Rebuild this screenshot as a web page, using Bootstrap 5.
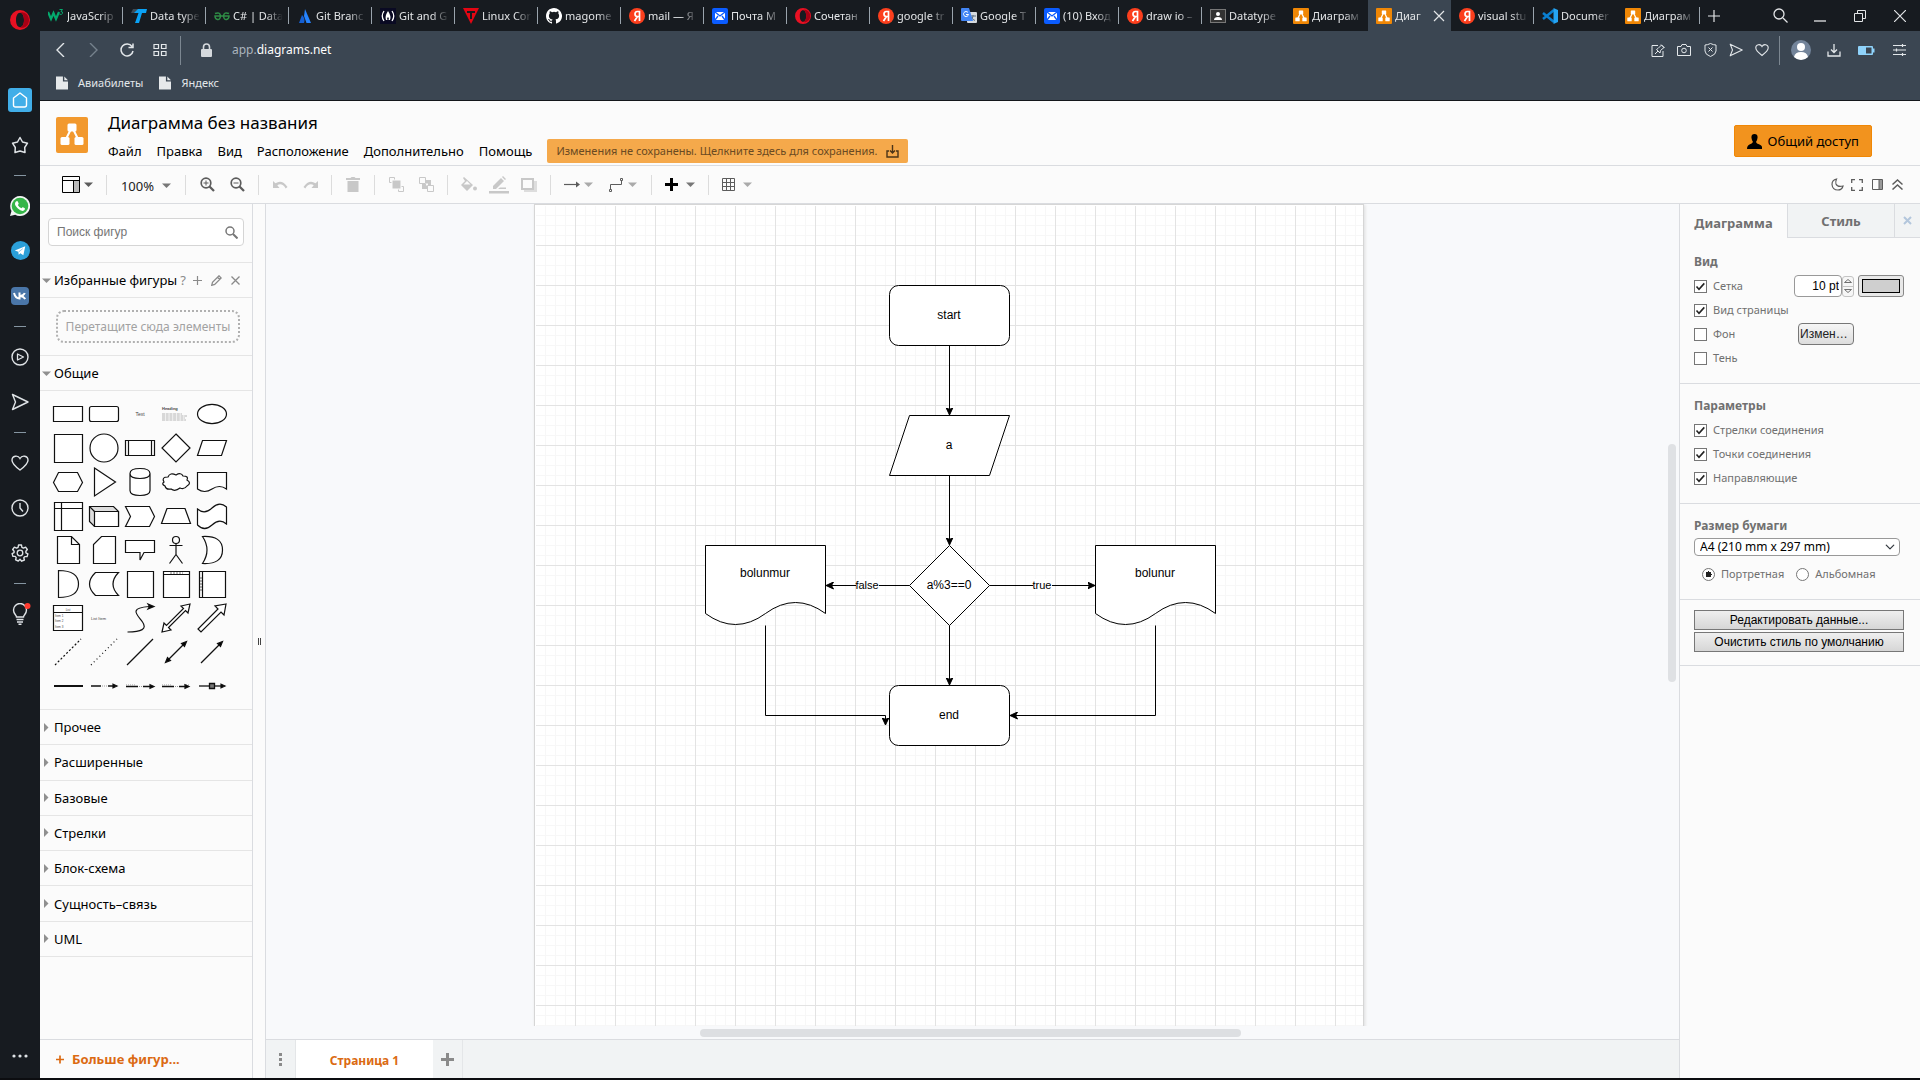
<!DOCTYPE html>
<html lang="ru">
<head>
<meta charset="utf-8">
<meta name="viewport" content="width=device-width, initial-scale=1">
<title>Диаграмма без названия</title>
<link href="https://cdn.jsdelivr.net/npm/bootstrap@5.3.0/dist/css/bootstrap.min.css" rel="stylesheet">
<style>
:root{--ui:"Noto Sans","Open Sans",sans-serif;--arial:"Liberation Sans",Arial,sans-serif;--line:#dadce0;--chrome:#3b4652;--dark:#171b20}
body{font-family:var(--ui);font-size:13px;line-height:20px;color:#000;background:#fbfbfb;overflow:hidden}
svg{display:block;flex:none}
button{font-family:inherit;color:inherit}
.bare{border:0;background:none;padding:0;display:flex;align-items:center;justify-content:center}
.ln{fill:none}
.ln:not([stroke]){stroke:currentColor}
.shell{border-bottom:2px solid #0c0d10}
/* left rail of the browser */
.rail{width:40px;background:var(--dark);color:#dfe3e6}
.rail .bare{width:40px;height:45px;flex:none}
.rail .brand{height:40px;margin-bottom:37px}
.rail hr{width:12px;height:1px;margin:8px 0 7px;border:0;background:#8595a1;opacity:1;flex:none}
.home-tile{width:24px;height:24px;background:#41aee8;border-radius:3px}
/* tab strip */
.strip{height:31px;background:var(--dark);color:#e3e5e7}
.tb-tab{width:83px;height:31px;padding:0 6px 0 8px;gap:3px;font-size:11px;color:inherit;text-decoration:none;position:relative}
.tb-tab .cap{overflow:hidden;white-space:nowrap;flex:1;-webkit-mask-image:linear-gradient(90deg,#000 65%,transparent);mask-image:linear-gradient(90deg,#000 65%,transparent)}
.tb-tab.cut::after{content:"";position:absolute;right:0;top:7px;height:17px;width:1px;background:#9aa4ad}
.tb-tab.on{background:var(--chrome)}
.win .bare{width:40px;height:31px}
/* address row */
.addr{height:38px;background:var(--chrome);color:#e3e7ea}
.addr .bare{height:30px}
.addr .nav-b{width:33px}
.addr .act{width:26px}
.addr .wide{width:33px}
.vbar{width:1px;height:29px;background:#7c8791}
.url{border:0;background:none;font-size:12px;color:#fff}
.url span{color:#aab4bd}
.marks{height:32px;background:var(--chrome);border-bottom:1px solid #14171b;color:#e3e7ea;font-size:11px}
.marks a{color:inherit;text-decoration:none;gap:10px}
/* editor header */
.head{height:65px;border-bottom:1px solid var(--line);padding:0 48px 0 16px}
.doc-title{font-size:17px;line-height:24px;margin:0 0 4px;padding-top:2px;font-weight:400}
.menu-row{gap:15px;height:24px}
.menu-row a{color:#000;text-decoration:none}
.save-b{height:24px;border:0;border-radius:2px;background:#f5a94b;color:#6a4a22;font-size:11px;padding:0 9px;gap:8px}
.share-b{height:32px;border:1px solid #f08705;border-radius:2px;background:#f2931e;padding:0 12px;gap:6px}
/* toolbar */
.tools{height:38px;border-bottom:1px solid var(--line);padding:0 13px 0 16px;color:#5c5c5c}
.tools .one{width:30px;height:30px;color:#c8c8c8}
.tools .dark{color:#5c5c5c}
.tools .drop{height:30px;width:36px;margin:0 6px 0 2px;gap:0}
.tools .drop>svg:first-child{margin:0 4px 0 3px}
.tools .zoomer{width:66px;height:30px;gap:8px;color:#222;padding-top:2px}
.tools .tail{width:20px;height:30px}
.rule{width:1px;height:20px;margin:0 6px;background:#dcdcdc}
/* shapes panel */
.side{width:213px;border-right:1px solid var(--line)}
.find{height:59px;padding:14px 8px 0;border-bottom:1px solid #e5e5e5}
.find .box{border:1px solid #d5d5d5;border-radius:4px;height:28px;background:#fff;padding:0 5px 0 6px}
.find input{border:0;outline:0;background:none;font:12px var(--arial);min-width:0}
.find input::placeholder{color:#757575}
.sec{height:35px;border-bottom:1px solid #e5e5e5;padding:0 12px 0 2px;gap:3px}
.sec button{color:#8a8a8a}
.sec a{color:#000;text-decoration:none}
.dropzone{height:33px;margin:12px 12px 12px 16px;border:2px dotted #b0b0b0;border-radius:8px;color:#a2a2a2;font-size:12px}
.zonewrap{border-bottom:1px solid #e5e5e5}
.pal{display:grid;grid-template-columns:repeat(5,36px);grid-auto-rows:34px;padding:6px 0 6px 10px;border-bottom:1px solid #e5e5e5}
.pal button{border:0;background:none;padding:0}
.pal svg{width:36px;height:34px;fill:#fff;stroke:#111;stroke-width:1.2}
.pal text{stroke:none;fill:#444;font-family:var(--arial)}
.closed-list{height:247px}
.closed-list .sec{flex:1;height:auto}
.more{height:39px;border-top:1px solid var(--line);color:#db6a12;font-weight:700;padding:0 16px;text-decoration:none;gap:8px}
.more:hover{color:#db6a12}
.split{width:13px;border-right:1px solid var(--line);color:#444}
/* canvas */
.stage{background:#f8f9fb}
.sheet{margin-left:268px;border:solid #d6d6d6;border-width:1px 1px 0;box-shadow:1px 1px 3px #ddd;background:#fff}
.sheet text{font:12px var(--arial);text-anchor:middle}
.sheet .sm{font-size:11px}
.vtrack{width:13px;padding:240px 3px 0 2px}
.vthumb{width:8px;height:238px;border-radius:4px;background:#dfe1e4}
.htrack{height:13px;padding:3px 0 0 434px;background:#f8f9fb}
.hthumb{width:541px;height:8px;border-radius:4px;background:#dddfe2}
.pages{height:39px;background:#f1f3f4;border-top:1px solid var(--line);color:#8a8a8a}
.pages .bare{width:30px;border-right:1px solid #e4e6e8}
.pages .cur{width:137px;background:#fff;color:#db6a12;font-size:12px;font-weight:700;text-decoration:none;padding-top:4px}
/* format panel */
.fmt{width:241px;border-left:1px solid var(--line);color:#707070;font-size:11px}
.ftabs{height:34px;font-size:13px;font-weight:700}
.ftabs button{width:107px;font-weight:700}
.ftabs .alt{background:#f1f3f4;border:solid var(--line);border-width:0 0 1px 1px}
.ftabs .x-b{flex:1;width:auto;color:#b3c6dc}
.blk{padding:10px 16px 13px 14px;border-bottom:1px solid var(--line)}
.blk.first{padding-top:12px}
.blk h2{font-size:12px;line-height:24px;margin:0;font-weight:700}
.line24{height:24px}
.tick{appearance:none;width:13px;height:13px;border:1px solid #767676;background:#fff;margin:0 6px 0 0;flex:none}
.tick:checked{background:#fff url("data:image/svg+xml,%3Csvg xmlns='http://www.w3.org/2000/svg' viewBox='0 0 11 11'%3E%3Cpath d='M1.5 5.5 4 8.2 9.3 2.4' fill='none' stroke='%23222' stroke-width='1.6'/%3E%3C/svg%3E")}
.dot{appearance:none;width:13px;height:13px;border:1px solid #767676;border-radius:50%;background:#fff;margin:0 6px 0 0;flex:none}
.dot:checked{background:radial-gradient(circle,#222 0 3px,#fff 3px)}
.num{width:48px;height:22px;border:1px solid #999;border-radius:4px;background:#fff;font:12px var(--arial);text-align:right;padding:0 2px;color:#000}
.spin{width:12px;height:21px;border:1px solid #c4c4c4;border-radius:3px;background:#f6f6f6}
.spin button{flex:1;width:100%}
.spin button+button{border-top:1px solid #c4c4c4}
.swatch{width:46px;height:22px;border:1px solid #888;border-radius:3px;background:#e8e8e8;padding:3px}
.swatch span{display:block;height:14px;border:1px solid #000;background:#cfcfcf}
.chg{width:56px;height:22px;border:1px solid #777;border-radius:4px;background:linear-gradient(#f6f6f6,#ddd);font:12px var(--arial);color:#222;padding:0 1px;text-align:left;margin-right:50px}
.paper{height:18px;width:206px;border:1px solid #999;border-radius:4px;font-size:12px;line-height:16px;padding:0 20px 0 5px;margin-bottom:6px;color:#000;background-color:#fff;background-position:right 4px center;background-size:10px}
.btns{gap:2px}
.wide-b{width:210px;height:20px;border:1px solid #777;background:linear-gradient(#efefef,#d6d6d6);font:12px var(--arial);color:#000;padding:0}
</style>
<script src="https://cdn.jsdelivr.net/npm/bootstrap@5.3.0/dist/js/bootstrap.bundle.min.js"></script>
</head>
<body>
<svg width="0" height="0" class="position-absolute" aria-hidden="true">
<defs>
<symbol id="i-ya" viewBox="0 0 16 16"><circle cx="8" cy="8" r="8" fill="#fc3f1d"/><path d="M10.500 13V3.500H8.300Q6 3.600 6 6t2.300 2.500h2M8.500 8.500L5.500 13" fill="none" stroke="#fff" stroke-width="1.700"/></symbol>
<symbol id="i-mail" viewBox="0 0 16 16"><rect width="16" height="16" rx="2" fill="#0b5cff"/><rect x="3" y="4" width="10" height="8" fill="#fff"/><path d="M3 4l5 4 5-4M3 12l3-4M13 12l-3-4" stroke="#0b5cff" stroke-width="1.300" fill="none"/></symbol>
<symbol id="i-dio" viewBox="0 0 16 16"><rect width="16" height="16" rx="1" fill="#f08705"/><path d="M8 4L4.500 11M8 4l3.500 7" stroke="#fff" stroke-width="1.300"/><rect x="5.800" y="2.500" width="4.400" height="3.800" rx=".6" fill="#fff"/><rect x="2.300" y="9.500" width="4.400" height="3.800" rx=".6" fill="#fff"/><rect x="9.300" y="9.500" width="4.400" height="3.800" rx=".6" fill="#fff"/></symbol>
<symbol id="i-opera" viewBox="0 0 20 20"><path fill-rule="evenodd" fill="#e81123" d="M10 0a10 10 0 1 0 0 20a10 10 0 0 0 0-20zM10 2.800c2.600 0 4 3.300 4 7.200s-1.400 7.200-4 7.200-4-3.300-4-7.200 1.400-7.200 4-7.200z"/><path fill="#a70014" d="M10 2.800c2.600 0 4 3.300 4 7.200s-1.400 7.200-4 7.200c3 2 9-1 9-7.200s-6-9.200-9-7.200z"/></symbol>
<symbol id="i-page" viewBox="0 0 13 15"><path fill="#e6e9eb" d="M0 .5h7.500v5.500H13v8.500H0zM9 .5l4 4H9z"/></symbol>
<symbol id="i-car" viewBox="0 0 9 5"><path fill="currentColor" d="M0 .5h9L4.500 5z"/></symbol>
<symbol id="i-send" viewBox="0 0 18 18"><path fill="none" stroke="currentColor" stroke-width="1.400" stroke-linejoin="round" d="M1.500 1.500l15.500 7.500L1.500 16.500l3-7.500z"/></symbol>
<symbol id="i-heart" viewBox="0 0 18 18"><path fill="none" stroke="currentColor" stroke-width="1.400" d="M9 16C5 13 1 10 1 6.200 1 1.500 7 .8 9 4.500 11 .8 17 1.500 17 6.200 17 10 13 13 9 16z"/></symbol>
<symbol id="i-rt" viewBox="0 0 5 9"><path fill="#8f8f8f" d="M0 0v9l4.500-4.500z"/></symbol>
</defs>
</svg>

<div class="shell vh-100 d-flex">
<nav class="rail d-flex flex-column align-items-center" aria-label="Боковая панель">
<button class="bare brand" aria-label="Opera"><svg width="20" height="20"><use href="#i-opera"/></svg></button>
<button class="bare" aria-label="Домой"><span class="home-tile d-flex align-items-center justify-content-center"><svg width="16" height="18" viewBox="0 0 16 18"><path class="ln" stroke="#fff" stroke-width="1.400" stroke-linejoin="round" d="M8 2l6.500 5v7q0 2-2 2h-9q-2 0-2-2V7z"/></svg></span></button>
<button class="bare" aria-label="Избранное"><svg width="18" height="18" viewBox="0 0 18 18"><path class="ln" stroke-width="1.500" stroke-linejoin="round" d="M9 1.500l2.500 4.500 5 1.200-2.800 4.300.3 5L9 15l-5 1.500.3-5L1.500 7.200l5-1.200z"/></svg></button>
<hr>
<button class="bare" aria-label="WhatsApp"><svg width="20" height="20" viewBox="0 0 20 20"><path fill="#f2f5f3" d="M10 0a10 10 0 1 1-4.800 18.700L0 20l1.500-5A10 10 0 0 1 10 0z"/><circle cx="10" cy="10" r="8.300" fill="#35b548"/><path fill="#fff" d="M6 5.500q1.500-1 2 .5l.7 1.600q0 .7-.9 1.400Q9 11.500 11.500 12.300q.8-1.200 1.400-1l2 1q.4 1.700-1.500 2.500-2.400.7-5.500-2.300T5 7.800Q5 6.300 6 5.500z"/></svg></button>
<button class="bare" aria-label="Telegram"><svg width="19" height="19" viewBox="0 0 20 20"><circle cx="10" cy="10" r="10" fill="#2b9fd8"/><path fill="#fff" d="M4 10l11-4.500-2 9.500-3.200-2.200-1.700 1.600-.4-3z"/><path stroke="#8cc7e6" d="M8 11.500l4.500-3.500"/></svg></button>
<button class="bare" aria-label="ВКонтакте"><svg width="18" height="18" viewBox="0 0 18 18"><rect width="18" height="18" rx="4" fill="#4a76a8"/><path class="ln" stroke="#fff" stroke-width="2" d="M3 6q1.500 5.500 5.500 5.500V5.500M13.800 6q-1 2.500-4.500 3 3 .3 5 3"/></svg></button>
<hr>
<button class="bare" aria-label="Плеер"><svg width="18" height="18" viewBox="0 0 18 18"><circle class="ln" cx="9" cy="9" r="8" stroke-width="1.400"/><path class="ln" stroke-width="1.300" stroke-linejoin="round" d="M6.500 6l6 3-6 3z"/></svg></button>
<button class="bare" aria-label="Поток"><svg width="18" height="18"><use href="#i-send"/></svg></button>
<hr>
<button class="bare" aria-label="Закладки"><svg width="18" height="18"><use href="#i-heart"/></svg></button>
<button class="bare" aria-label="История"><svg width="18" height="18" viewBox="0 0 18 18"><circle class="ln" cx="9" cy="9" r="8" stroke-width="1.400"/><path class="ln" stroke-width="1.400" d="M9 4v5l3 3.500"/></svg></button>
<button class="bare" aria-label="Настройки"><svg width="18" height="18" viewBox="0 0 18 18"><circle class="ln" cx="9" cy="9" r="2.800" stroke-width="1.300"/><path class="ln" stroke-width="1.400" stroke-linejoin="round" d="M7.500 1h3l.4 2.300 1.500.8 2.200-1 1.700 2.400L14.900 7.200v1.600l2 1-.8 2.800-2.300 0-1 1.200.6 2.200-2.700 1.200L9 15.300 7.300 17l-2.700-1.200.6-2.200-1-1.200-2.300 0-.8-2.800 2-1V7.200L1.700 5.500l1.700-2.400 2.200 1 1.500-.8z"/></svg></button>
<hr>
<button class="bare" aria-label="Подсказки"><svg width="22" height="22" viewBox="0 0 22 22"><path class="ln" stroke-width="1.400" d="M7.500 14c0-2-3-3-3-7a6.500 6.500 0 0 1 13 0c0 4-3 5-3 7zM7.500 16.500h7M8 19h6M9.500 21.300h3"/><circle cx="18.500" cy="3" r="3" fill="#ff3b30"/></svg></button>
<button class="bare mt-auto" aria-label="Ещё"><svg width="16" height="4" viewBox="0 0 16 4" fill="currentColor"><circle cx="2" cy="2" r="1.600"/><circle cx="8" cy="2" r="1.600"/><circle cx="14" cy="2" r="1.600"/></svg></button>
</nav>

<div class="d-flex flex-column flex-grow-1 overflow-hidden">
<div class="strip d-flex align-items-center flex-shrink-0">
<a href="#" class="tb-tab cut d-flex align-items-center"><svg width="16" height="16" viewBox="0 0 16 16"><path d="M0 4l3 7 2.500-6L8 11l3-7" fill="none" stroke="#04aa6d" stroke-width="2.200"/><path d="M11.500 1.500h3l-1.500 2q2 0 1.500 1.800t-3 .9" fill="none" stroke="#04aa6d"/></svg><span class="cap">JavaScrip</span></a>
<a href="#" class="tb-tab cut d-flex align-items-center"><svg width="16" height="16" viewBox="0 0 16 16"><path fill="#0aa2f5" d="M2 1h14l-1 4h-4L8 15H4L7.500 5H3z"/><path fill="#3d4a55" d="M2 1h5L3 5H0z"/></svg><span class="cap">Data type</span></a>
<a href="#" class="tb-tab cut d-flex align-items-center"><svg width="16" height="16" viewBox="0 0 16 16"><path d="M1 5.500q5-2 5.500 2.500-.5 4-3 3.500T1 8h14q0 3-2.500 3.500T9.500 8q.5-4.500 5.500-2.500" fill="none" stroke="#2f8d46" stroke-width="1.500"/></svg><span class="cap">C# | Data</span></a>
<a href="#" class="tb-tab cut d-flex align-items-center"><svg width="16" height="16" viewBox="0 0 16 16"><path fill="#2684ff" d="M8 1l6 14H9.500L7 8z"/><path fill="#1560d4" d="M5 7q3.500 3 2 8H2z"/></svg><span class="cap">Git Branc</span></a>
<a href="#" class="tb-tab cut d-flex align-items-center"><svg width="16" height="16" viewBox="0 0 16 16"><rect width="16" height="16" fill="#0a0a23"/><path d="M4 3Q.5 8 4 13M12 3q3.500 5 0 10" fill="none" stroke="#fff" stroke-width="1.300"/><path fill="#fff" d="M8 3q3.500 5 2 9H8.500q1-2-.5-3-1.500 1-.5 3H6Q4.500 8.500 8 3z"/></svg><span class="cap">Git and G</span></a>
<a href="#" class="tb-tab cut d-flex align-items-center"><svg width="16" height="16" viewBox="0 0 16 16"><path fill="#e30613" d="M0 0h16L8 16z"/><path fill="#171b20" d="M4 3h8v2H9v6H7V5H4z"/></svg><span class="cap">Linux Cor</span></a>
<a href="#" class="tb-tab cut d-flex align-items-center"><svg width="16" height="16" viewBox="0 0 16 16"><path fill="#fff" d="M8 0C3.580 0 0 3.580 0 8c0 3.540 2.290 6.530 5.470 7.590.4.070.550-.170.550-.380 0-.190-.010-.820-.010-1.490-2.010.370-2.530-.490-2.690-.940-.090-.230-.480-.940-.820-1.130-.280-.150-.680-.520-.010-.530.630-.010 1.080.580 1.230.820.720 1.210 1.870.870 2.330.660.070-.520.280-.870.510-1.070-1.780-.2-3.640-.890-3.640-3.950 0-.870.310-1.590.820-2.150-.080-.2-.360-1.020.080-2.120 0 0 .670-.210 2.200.820a7.640 7.640 0 0 1 4 0c1.530-1.040 2.200-.820 2.200-.820.440 1.100.160 1.920.080 2.120.510.560.820 1.270.820 2.150 0 3.070-1.870 3.750-3.650 3.950.290.250.540.730.540 1.480 0 1.070-.010 1.930-.010 2.200 0 .210.150.460.550.380A8 8 0 0 0 8 0z"/></svg><span class="cap">magome</span></a>
<a href="#" class="tb-tab cut d-flex align-items-center"><svg width="16" height="16"><use href="#i-ya"/></svg><span class="cap">mail — Я</span></a>
<a href="#" class="tb-tab cut d-flex align-items-center"><svg width="16" height="16"><use href="#i-mail"/></svg><span class="cap">Почта M</span></a>
<a href="#" class="tb-tab cut d-flex align-items-center"><svg width="16" height="16"><use href="#i-opera"/></svg><span class="cap">Сочетан</span></a>
<a href="#" class="tb-tab cut d-flex align-items-center"><svg width="16" height="16"><use href="#i-ya"/></svg><span class="cap">google tr</span></a>
<a href="#" class="tb-tab cut d-flex align-items-center"><svg width="16" height="16" viewBox="0 0 16 16"><rect x="6" y="4" width="10" height="11" rx="1" fill="#d5d9de"/><path d="M9 8h6M12 7v1q0 3-3 4.500M10 9q1 2.500 4 3.500" stroke="#5f7180" fill="none"/><path fill="#4285f4" d="M1 0h7l4 13H1q-1 0-1-1V1q0-1 1-1z"/><path d="M7 4.500A2.500 2.500 0 1 0 7.500 6.500H5" fill="none" stroke="#fff"/></svg><span class="cap">Google T</span></a>
<a href="#" class="tb-tab cut d-flex align-items-center"><svg width="16" height="16"><use href="#i-mail"/></svg><span class="cap">(10) Вход</span></a>
<a href="#" class="tb-tab cut d-flex align-items-center"><svg width="16" height="16"><use href="#i-ya"/></svg><span class="cap">draw io –</span></a>
<a href="#" class="tb-tab d-flex align-items-center"><svg width="16" height="16" viewBox="0 0 16 16"><rect x=".5" y="1.500" width="15" height="13" fill="#333" stroke="#777"/><circle cx="8" cy="6" r="2" fill="#fff"/><path fill="#fff" d="M4 12q0-3 4-3t4 3z"/></svg><span class="cap">Datatype</span></a>
<a href="#" class="tb-tab d-flex align-items-center"><svg width="16" height="16"><use href="#i-dio"/></svg><span class="cap">Диаграм</span></a>
<a href="#" class="tb-tab on d-flex align-items-center"><svg width="16" height="16"><use href="#i-dio"/></svg><span class="cap">Диаг</span><svg width="12" height="12" viewBox="0 0 12 12"><path class="ln" stroke-width="1.200" d="M1 1l10 10M11 1L1 11"/></svg></a>
<a href="#" class="tb-tab cut d-flex align-items-center"><svg width="16" height="16"><use href="#i-ya"/></svg><span class="cap">visual stu</span></a>
<a href="#" class="tb-tab d-flex align-items-center"><svg width="16" height="16" viewBox="0 0 16 16"><path d="M1 5l11 9M1 11l11-9" stroke="#0a7fd0" stroke-width="2.500"/><path fill="#25a4f2" d="M11.500 0L16 2v12l-4.500 2z"/></svg><span class="cap">Documer</span></a>
<a href="#" class="tb-tab cut d-flex align-items-center"><svg width="16" height="16"><use href="#i-dio"/></svg><span class="cap">Диаграм</span></a>
<button class="bare px-2" aria-label="Новая вкладка"><svg width="12" height="12" viewBox="0 0 12 12"><path class="ln" stroke-width="1.200" d="M6 0v12M0 6h12"/></svg></button>
<div class="win d-flex ms-auto">
<button class="bare" aria-label="Поиск вкладок"><svg width="15" height="15" viewBox="0 0 15 15"><circle class="ln" cx="6" cy="6" r="5" stroke-width="1.300"/><path class="ln" stroke-width="1.300" d="M10 10l4.500 4.500"/></svg></button>
<button class="bare" aria-label="Свернуть"><svg width="12" height="12" viewBox="0 0 12 12"><path class="ln" stroke-width="1.300" d="M0 11h12"/></svg></button>
<button class="bare" aria-label="Восстановить"><svg width="12" height="12" viewBox="0 0 12 12"><path class="ln" d="M.5 3.500h8v8h-8zM3.500 3.500v-3h8v8h-3"/></svg></button>
<button class="bare" aria-label="Закрыть"><svg width="12" height="12" viewBox="0 0 12 12"><path class="ln" stroke-width="1.200" d="M0 0l12 12M12 0L0 12"/></svg></button>
</div>
</div>

<div class="addr d-flex align-items-center flex-shrink-0 ps-1">
<button class="bare nav-b" aria-label="Назад"><svg width="9" height="14" viewBox="0 0 9 14"><path class="ln" stroke-width="1.400" d="M8 0L1 7l7 7"/></svg></button>
<button class="bare nav-b" aria-label="Вперёд"><svg width="9" height="14" viewBox="0 0 9 14"><path class="ln" stroke="#76828d" stroke-width="1.400" d="M1 0l7 7-7 7"/></svg></button>
<button class="bare nav-b" aria-label="Обновить"><svg width="14" height="14" viewBox="0 0 14 14"><path class="ln" stroke-width="1.500" d="M12 3.500A6 6 0 1 0 13 8M13 .5v4H8.500"/></svg></button>
<button class="bare nav-b" aria-label="Экспресс-панель"><svg width="14" height="12" viewBox="0 0 14 12"><path class="ln" stroke-width="1.200" d="M1 .5h4.500v4H1zM8.500 .5H13v4H8.500zM1 7.500h4.500v4H1zM8.500 7.500H13v4H8.500z"/></svg></button>
<span class="vbar ms-1 me-3"></span>
<svg width="11" height="14" class="ms-1" viewBox="0 0 11 14"><rect y="6" width="11" height="8" rx="1" fill="#d5d9dd"/><path class="ln" stroke="#d5d9dd" stroke-width="1.600" d="M2.500 7V4a3 3 0 0 1 6 0v3"/></svg>
<button class="url p-0 ms-3 ps-1"><span>app.</span>diagrams.net</button>
<div class="d-flex align-items-center ms-auto">
<button class="bare act" aria-label="Закрепить"><svg width="14" height="14" viewBox="0 0 14 14"><path class="ln" d="M7 2.500H1v11h11V8M4 11l3-3M5.500 6.500l3.500 3.500.5-2.500L13 4.500 10.500 2 7 5.500z M10 1.500L13.500 5"/></svg></button>
<button class="bare act" aria-label="Снимок"><svg width="14" height="14" viewBox="0 0 14 14"><path class="ln" d="M.5 3.500H4l1-2h4l1 2h3.500v9H.5z"/><circle class="ln" cx="7" cy="7.500" r="2.300"/></svg></button>
<button class="bare act" aria-label="Блокировка"><svg width="13" height="14" viewBox="0 0 13 14"><path class="ln" d="M6.500 .5q3 1.500 5.500 1.500v6q0 3.500-5.500 5.500Q1 11.500 1 8V2q2.500 0 5.500-1.500zM4.500 4.500l4 4M8.500 4.500l-4 4"/></svg></button>
<button class="bare act" aria-label="Отправить"><svg width="14" height="14"><use href="#i-send"/></svg></button>
<button class="bare act" aria-label="В закладки"><svg width="14" height="14"><use href="#i-heart"/></svg></button>
<span class="vbar ms-1"></span>
<button class="bare wide ms-1" aria-label="Профиль"><svg width="20" height="20" viewBox="0 0 20 20"><circle cx="10" cy="10" r="10" fill="#73849a"/><circle cx="10" cy="7" r="4" fill="#fff"/><path fill="#fff" d="M3 17q1-5 7-5t7 5q-3 3-7 3t-7-3z"/></svg></button>
<button class="bare wide" aria-label="Загрузки"><svg width="14" height="14" viewBox="0 0 14 14"><path class="ln" stroke-width="1.300" d="M1 8.500v4.500h12V8.500M7 1v8M4 6.500l3 3 3-3"/></svg></button>
<button class="bare wide" aria-label="Батарея"><svg width="17" height="9" viewBox="0 0 17 9"><rect width="15" height="9" rx="1" fill="#8fd3fb"/><rect x="8" y="1.500" width="5.500" height="6" fill="#3b4652"/><path fill="#8fd3fb" d="M15 2.500h1.500v4H15z"/></svg></button>
<button class="bare wide me-1" aria-label="Простая настройка"><svg width="13" height="12" viewBox="0 0 13 12"><path class="ln" stroke-width="1.200" d="M0 1.500h13M0 6h13M0 10.500h13M9.500 0v3M3.500 4.500v3M9.500 9v3"/></svg></button>
</div>
</div>
<div class="marks d-flex align-items-start flex-shrink-0 ps-3 gap-3">
<a href="#" class="d-flex align-items-center pt-1"><svg width="12" height="14"><use href="#i-page"/></svg>Авиабилеты</a>
<a href="#" class="d-flex align-items-center pt-1"><svg width="12" height="14"><use href="#i-page"/></svg>Яндекс</a>
</div>

<header class="head d-flex align-items-start flex-shrink-0">
<svg width="32" height="36" viewBox="0 0 32 36" class="mt-3 me-3"><rect width="32" height="36" rx="2" fill="#f2992e"/><path d="M16 10L9 24M16 10l7 14" stroke="#fff" stroke-width="2"/><rect x="11.500" y="6.500" width="9" height="8" rx="1.500" fill="#fff"/><rect x="4.500" y="20" width="9" height="8" rx="1.500" fill="#fff"/><rect x="18.500" y="20" width="9" height="8" rx="1.500" fill="#fff"/></svg>
<div class="ms-1 pt-2">
<h1 class="doc-title">Диаграмма без названия</h1>
<nav class="menu-row d-flex align-items-center">
<a href="#">Файл</a><a href="#">Правка</a><a href="#">Вид</a><a href="#">Расположение</a><a href="#">Дополнительно</a><a href="#">Помощь</a>
<button class="save-b d-flex align-items-center">Изменения не сохранены. Щелкните здесь для сохранения.<svg width="13" height="13" viewBox="0 0 13 13"><path class="ln" stroke="#4b3418" stroke-width="1.400" d="M3 6H1v6h11V6h-2M6.500 0v8M4 5.500L6.500 8 9 5.500"/></svg></button>
</nav>
</div>
<button class="share-b d-flex align-items-center ms-auto mt-4"><svg width="15" height="15" viewBox="0 0 15 15"><path d="M7.500 0q3.500 0 3 4-.3 2.500-1.500 4 .3 1.500 3.500 2.500T15 15H0q0-3.500 2.500-4.500T6 8Q4.800 6.500 4.500 4q-.5-4 3-4z"/></svg>Общий доступ</button>
</header>

<div class="tools d-flex align-items-center flex-shrink-0" role="toolbar">
<button class="bare drop" aria-label="Вид"><svg width="18" height="17" viewBox="0 0 18 17"><path fill="#bbb" d="M11 5h6v11h-6z"/><path class="ln" stroke="#000" d="M.5 .5h17v16H.5zM.5 4.500h17M11.500 4.500v12"/></svg><svg width="9" height="5"><use href="#i-car"/></svg></button>
<span class="rule"></span>
<button class="bare zoomer">100%<svg width="9" height="5" color="#777"><use href="#i-car"/></svg></button>
<span class="rule"></span>
<button class="bare one dark" aria-label="Увеличить"><svg width="15" height="15" viewBox="0 0 15 15"><circle class="ln" cx="6" cy="6" r="4.800" stroke-width="1.700"/><path class="ln" stroke-width="2.300" d="M9.500 9.500l4.500 4.500"/><path class="ln" d="M3.500 6h5M6 3.500v5"/></svg></button>
<button class="bare one dark" aria-label="Уменьшить"><svg width="15" height="15" viewBox="0 0 15 15"><circle class="ln" cx="6" cy="6" r="4.800" stroke-width="1.700"/><path class="ln" stroke-width="2.300" d="M9.500 9.500l4.500 4.500"/><path class="ln" d="M3.500 6h5"/></svg></button>
<span class="rule"></span>
<button class="bare one" aria-label="Отменить"><svg width="15" height="8" viewBox="0 0 15 8"><path fill="currentColor" d="M0 0l2.500 2.300Q9-2 14.500 6l-1.800 1.500Q9 1.500 4.300 4.200L6.500 7H0z"/></svg></button>
<button class="bare one" aria-label="Повторить"><svg width="15" height="8" viewBox="0 0 15 8"><path fill="currentColor" d="M15 0l-2.500 2.300Q6-2 .5 6l1.800 1.500Q6 1.500 10.700 4.200L8.500 7H15z"/></svg></button>
<span class="rule"></span>
<button class="bare one" aria-label="Удалить"><svg width="14" height="15" viewBox="0 0 14 15"><path fill="currentColor" d="M0 1h4.500l1-1h3l1 1H14v2H0zM1.500 4h11v11h-11z"/></svg></button>
<span class="rule"></span>
<button class="bare one" aria-label="На передний план"><svg width="15" height="15" viewBox="0 0 15 15"><path fill="currentColor" d="M3.500 3.500h8v8h-8z"/><path class="ln" d="M2.500 5.500h-2v-5h5v2M12.500 9.500h2v5h-5v-2"/></svg></button>
<button class="bare one" aria-label="На задний план"><svg width="15" height="15" viewBox="0 0 15 15"><path fill="currentColor" d="M7 3h5v5H9v-1.500H7zM3 7h4v1.500h1V12H3z"/><path class="ln" d="M.5 .5h6v6h-6zM8.500 8.500h6v6h-6z"/></svg></button>
<span class="rule"></span>
<button class="bare one" aria-label="Цвет заливки"><svg width="16" height="16" viewBox="0 0 16 16"><path fill="currentColor" fill-rule="evenodd" d="M3 0l9 8-6 6-6-6 4-4-2-3zM5 5L2.500 7.500h7L6 4z"/><circle cx="14" cy="11.500" r="2" fill="currentColor"/></svg></button>
<button class="bare one" aria-label="Цвет линии"><svg width="20" height="18" viewBox="0 0 20 18"><path fill="currentColor" d="M4 10l8-8 3 3-8 8H4zM13 1l1-1 3 3-1 1zM9 13l2-1.500h6V13zM0 15h20v2.500H0z"/></svg></button>
<button class="bare one" aria-label="Тень"><svg width="16" height="14" viewBox="0 0 16 14"><path fill="#ddd" d="M3 3h13v11H3z"/><path fill="#fbfbfb" stroke="#c8c8c8" stroke-width="2" d="M1 1h11v10H1z"/></svg></button>
<span class="rule"></span>
<button class="bare drop" aria-label="Соединение"><svg width="16" height="7" viewBox="0 0 16 7"><path class="ln" stroke-width="1.200" d="M0 3.500h14"/><path fill="currentColor" d="M12 .5l4 3-4 3z"/></svg><svg width="9" height="5" color="#aaa"><use href="#i-car"/></svg></button>
<button class="bare drop" aria-label="Точки пути"><svg width="16" height="16" viewBox="0 0 16 16"><path class="ln" d="M2.500 12V7.500h11V4M1.500 12.500h2v2h-2zM12.500 1.500h2v2h-2z"/></svg><svg width="9" height="5" color="#aaa"><use href="#i-car"/></svg></button>
<span class="rule"></span>
<button class="bare drop" aria-label="Вставка"><svg width="13" height="13" viewBox="0 0 13 13"><path d="M5 0h3v5h5v3H8v5H5V8H0V5h5z"/></svg><svg width="9" height="5" class="ms-1" color="#777"><use href="#i-car"/></svg></button>
<span class="rule"></span>
<button class="bare drop" aria-label="Таблица"><svg width="13" height="13" viewBox="0 0 13 13"><path class="ln" d="M.5 .5h12v12H.5zM.5 4.500h12M.5 8.500h12M4.500 .5v12M8.500 .5v12"/></svg><svg width="9" height="5" class="ms-1" color="#aaa"><use href="#i-car"/></svg></button>
<div class="d-flex ms-auto">
<button class="bare tail" aria-label="Тёмная тема"><svg width="13" height="13" viewBox="0 0 13 13"><path class="ln" stroke-width="1.200" d="M5.500 1Q1 2 1 6.500 1.500 12 7 12q4 0 5-4Q6.500 9.500 5 6q-.7-2.500.5-5z"/></svg></button>
<button class="bare tail" aria-label="Полный экран"><svg width="12" height="12" viewBox="0 0 12 12"><path class="ln" stroke-width="1.300" d="M.7 4V.7H4M8 .7h3.300V4M11.300 8v3.300H8M4 11.300H.7V8"/></svg></button>
<button class="bare tail" aria-label="Формат"><svg width="11" height="11" viewBox="0 0 11 11"><path fill="#999" d="M7 1h3v9H7z"/><path class="ln" d="M.5 .5h10v10H.5zM7 .5v10"/></svg></button>
<button class="bare tail" aria-label="Свернуть"><svg width="11" height="11" viewBox="0 0 11 11"><path class="ln" stroke-width="1.500" d="M.5 5.500l5-4.500 5 4.500M.5 10.500l5-4.500 5 4.500"/></svg></button>
</div>
</div>

<main class="d-flex flex-grow-1 overflow-hidden">
<aside class="side d-flex flex-column flex-shrink-0">
<div class="find"><div class="box d-flex align-items-center"><input class="flex-grow-1" type="text" placeholder="Поиск фигур" aria-label="Поиск фигур"><svg width="13" height="13" viewBox="0 0 13 13"><circle class="ln" cx="5" cy="5" r="4" stroke="#777" stroke-width="1.500"/><path stroke="#777" stroke-width="2" d="M8 8l4.500 4.500"/></svg></div></div>
<div class="sec d-flex align-items-center"><svg width="9" height="5" color="#8f8f8f"><use href="#i-car"/></svg><a href="#">Избранные фигуры</a>
<button class="bare" aria-label="Справка">?</button>
<div class="d-flex flex-grow-1 justify-content-between ps-1">
<button class="bare" aria-label="Добавить"><svg width="9" height="9" viewBox="0 0 9 9"><path class="ln" stroke-width="1.200" d="M4.500 0v9M0 4.500h9"/></svg></button>
<button class="bare" aria-label="Изменить"><svg width="11" height="11" viewBox="0 0 11 11"><path class="ln" stroke-width="1.300" d="M.7 10.300l.8-3L8 .8l2.200 2.200-6.500 6.500zM6.500 2.300l2.200 2.200"/></svg></button>
<button class="bare" aria-label="Убрать"><svg width="9" height="9" viewBox="0 0 9 9"><path class="ln" stroke-width="1.300" d="M.5 .5l8 8M8.500 .5l-8 8"/></svg></button>
</div></div>
<div class="zonewrap"><div class="dropzone d-flex align-items-center justify-content-center text-nowrap">Перетащите сюда элементы</div></div>
<div class="sec d-flex align-items-center"><svg width="9" height="5" color="#8f8f8f"><use href="#i-car"/></svg><a href="#">Общие</a></div>
<div class="pal">
<button aria-label="Прямоугольник"><svg viewBox="-18 -17 36 34"><path d="M-14.500-7.500h29v15h-29z"/></svg></button>
<button aria-label="Скруглённый"><svg viewBox="-18 -17 36 34"><rect x="-14.500" y="-7.500" width="29" height="15" rx="2"/></svg></button>
<button aria-label="Текст"><svg viewBox="-18 -17 36 34"><text x="0" y="2" font-size="5" text-anchor="middle">Text</text></svg></button>
<button aria-label="Заголовок"><svg viewBox="-18 -17 36 34"><text x="-14" y="-4" font-size="4" font-weight="700">Heading</text><path stroke="#999" stroke-width=".7" stroke-dasharray="3 .7" d="M-14 0h20M-14 2h25M-14 4h23M-14 6h24"/></svg></button>
<button aria-label="Эллипс"><svg viewBox="-18 -17 36 34"><ellipse rx="14.500" ry="9.700"/></svg></button>
<button aria-label="Квадрат"><svg viewBox="-18 -17 36 34"><path d="M-13.500-13.500h28v28h-28z"/></svg></button>
<button aria-label="Круг"><svg viewBox="-18 -17 36 34"><circle r="14"/></svg></button>
<button aria-label="Процесс"><svg viewBox="-18 -17 36 34"><path d="M-14.500-7.500h29v15h-29zM-11.500-7.500v15M11.500-7.500v15"/></svg></button>
<button aria-label="Ромб"><svg viewBox="-18 -17 36 34"><path d="M0-14L14 0 0 14-14 0z"/></svg></button>
<button aria-label="Параллелограмм"><svg viewBox="-18 -17 36 34"><path d="M-9.500-7.500h24l-5 15h-24z"/></svg></button>
<button aria-label="Шестиугольник"><svg viewBox="-18 -17 36 34"><path d="M-9.500-9.500h19l5 10-5 9h-19l-5-9z"/></svg></button>
<button aria-label="Треугольник"><svg viewBox="-18 -17 36 34"><path d="M-9.500-14l21 14-21 14z"/></svg></button>
<button aria-label="Цилиндр"><svg viewBox="-18 -17 36 34"><path d="M-10-8.500v17q0 5 10 5t10-5v-17q0-5-10-5t-10 5q0 5 10 5t10-5"/></svg></button>
<button aria-label="Облако"><svg viewBox="-18 -17 36 34"><path d="M-8-5q2-5 8-2 5-3 7 1 6 0 4 4 5 3 0 6-3 4-7 2-5 4-9 1-5 1-6-3-4-2-1-4-3-5 4-5z"/></svg></button>
<button aria-label="Документ"><svg viewBox="-18 -17 36 34"><path d="M-14.500-9.500h29V7q-7-5-14.500 0t-14.500 0z"/></svg></button>
<button aria-label="Внутреннее хранилище"><svg viewBox="-18 -17 36 34"><path d="M-13.500-13.500h28v28h-28zM-13.500-7.500h28M-6.500-13.500v28"/></svg></button>
<button aria-label="Куб"><svg viewBox="-18 -17 36 34"><path fill="#ddd" d="M-14.500-9.500h24l5 5v15h-24l-5-5z"/><path d="M-9.500-4.500h24v15h-24z"/><path fill="none" d="M-14.500-9.500l5 5"/></svg></button>
<button aria-label="Шаг"><svg viewBox="-18 -17 36 34"><path d="M-14.500-9.500h24l5 10-5 10h-24l5-10z"/></svg></button>
<button aria-label="Трапеция"><svg viewBox="-18 -17 36 34"><path d="M-9-7.500H9l5.500 15h-29z"/></svg></button>
<button aria-label="Лента"><svg viewBox="-18 -17 36 34"><path d="M-14.500-7q7 6 14.500-1t14.500-1V8q-7-6-14.500 1t-14.500 0z"/></svg></button>
<button aria-label="Заметка"><svg viewBox="-18 -17 36 34"><path d="M-10.500-13.500h14l8 8v19h-22zM3.500-13.500v8h8"/></svg></button>
<button aria-label="Карточка"><svg viewBox="-18 -17 36 34"><path d="M-2.500-13.500h14v27h-22v-19z"/></svg></button>
<button aria-label="Выноска"><svg viewBox="-18 -17 36 34"><path d="M-14.500-9.500h29v12H4L0 10V2.500h-14.500z"/></svg></button>
<button aria-label="Актёр"><svg viewBox="-18 -17 36 34"><circle cy="-10" r="3.500"/><path fill="none" d="M0-6.500V4.500M-6.500-4.500h13M0 4.500l-6.500 9M0 4.500l6.500 9"/></svg></button>
<button aria-label="Или"><svg viewBox="-18 -17 36 34"><path d="M-9.500-13.500q20-1 20 13.500t-20 13.500q9-13.500 0-27z"/></svg></button>
<button aria-label="И"><svg viewBox="-18 -17 36 34"><path d="M-9.500-13.500q20 0 20 13.500t-20 13.500z"/></svg></button>
<button aria-label="Хранилище данных"><svg viewBox="-18 -17 36 34"><path d="M-8.500-11.500h23q-11 11.500 0 23h-23q-12-11.500 0-23z"/></svg></button>
<button aria-label="Контейнер"><svg viewBox="-18 -17 36 34"><path d="M-12.500-12.500h26v26h-26z"/></svg></button>
<button aria-label="Контейнер с заголовком"><svg viewBox="-18 -17 36 34"><path d="M-12.500-12.500h26v26h-26zM-12.500-9.500h26"/><path stroke="#777" stroke-width="1" stroke-dasharray="2 1" d="M-6-11h13"/></svg></button>
<button aria-label="Горизонтальный контейнер"><svg viewBox="-18 -17 36 34"><path d="M-12.500-12.500h26v26h-26zM-9.500-12.500v26"/><path stroke="#777" stroke-dasharray="2 1" d="M-11-7v14"/></svg></button>
<button aria-label="Список"><svg viewBox="-18 -17 36 34"><path d="M-14.500-12.500h29v25h-29zM-14.500-5.500h29"/><text y="-7.500" font-size="3" text-anchor="middle">List</text><text x="-13" y="-1.500" font-size="3">Item 1</text><text x="-13" y="4" font-size="3">Item 2</text><text x="-13" y="10" font-size="3">Item 3</text></svg></button>
<button aria-label="Элемент списка"><svg viewBox="-18 -17 36 34"><text x="-13" y="2" font-size="4">List Item</text></svg></button>
<button aria-label="Кривая"><svg viewBox="-18 -17 36 34"><path fill="none" d="M-12.500 14c14 0 20-3 15-10S-12-10 9-11.500"/><path fill="#000" d="M14-11.500l-6-2.500 1.500 2.500L8-9z"/></svg></button>
<button aria-label="Двойная стрелка"><svg viewBox="-18 -17 36 34"><path d="M14-14l-9 2 2.500 2.500-17 17L-12 5l-2 9 9-2-2.500-2.500 17-17L12-5z"/></svg></button>
<button aria-label="Стрелка"><svg viewBox="-18 -17 36 34"><path d="M14-14L3-12l3 3-20 20 3 3L9-6l3 3z"/></svg></button>
<button aria-label="Пунктир"><svg viewBox="-18 -17 36 34"><path stroke-dasharray="2 2" d="M-13 13l26-26"/></svg></button>
<button aria-label="Точки"><svg viewBox="-18 -17 36 34"><path stroke-dasharray="1 3" d="M-13 13l26-26"/></svg></button>
<button aria-label="Линия"><svg viewBox="-18 -17 36 34"><path d="M-13 13l26-26"/></svg></button>
<button aria-label="Двунаправленная"><svg viewBox="-18 -17 36 34"><path d="M-9 9L9-9"/><path fill="#000" d="M10.500-10.500l-5 2 3 3zM-10.500 10.500l5-2-3-3z"/></svg></button>
<button aria-label="Направленная"><svg viewBox="-18 -17 36 34"><path d="M-11 11L9-9"/><path fill="#000" d="M10.500-10.500l-5 2 3 3z"/></svg></button>
<button aria-label="Связь"><svg viewBox="-18 -17 36 34"><path stroke-width="2" d="M-14 0h29"/></svg></button>
<button aria-label="Связь с подписью"><svg viewBox="-18 -17 36 34"><path stroke-width="1.300" d="M-13 0h10M4 0h6"/><path stroke="#999" stroke-dasharray="1 1" d="M-2 0h5"/><path fill="#000" d="M13 0L9-1.800v3.600z"/></svg></button>
<button aria-label="Связь с двумя подписями"><svg viewBox="-18 -17 36 34"><path stroke-width="1.300" d="M-14 .5h12M3 .5h8"/><path stroke="#999" stroke-dasharray="1 1" d="M-14-1h10M-1 .5h4"/><path fill="#000" d="M14 .5L10-1.300v3.600z"/></svg></button>
<button aria-label="Связь с тремя подписями"><svg viewBox="-18 -17 36 34"><path stroke-width="1.300" d="M-14 .5h12M3 .5h8"/><path stroke="#999" stroke-dasharray="1 1" d="M-14-1h10M-1 .5h4M8-1h6"/><path fill="#000" d="M13 .5L9-1.300v3.600z"/></svg></button>
<button aria-label="Связь с символом"><svg viewBox="-18 -17 36 34"><path stroke-width="1.300" d="M-13 0h23"/><path fill="#777" stroke-width="1.300" d="M-2.500-2.500h5v5h-5z"/><path fill="#000" d="M13 0L9-1.800v3.600z"/></svg></button>
</div>
<div class="closed-list d-flex flex-column">
<div class="sec d-flex align-items-center ps-1"><svg width="7" height="9" viewBox="0 0 7 9"><use href="#i-rt" width="5" height="9"/></svg><a href="#">Прочее</a></div>
<div class="sec d-flex align-items-center ps-1"><svg width="7" height="9" viewBox="0 0 7 9"><use href="#i-rt" width="5" height="9"/></svg><a href="#">Расширенные</a></div>
<div class="sec d-flex align-items-center ps-1"><svg width="7" height="9" viewBox="0 0 7 9"><use href="#i-rt" width="5" height="9"/></svg><a href="#">Базовые</a></div>
<div class="sec d-flex align-items-center ps-1"><svg width="7" height="9" viewBox="0 0 7 9"><use href="#i-rt" width="5" height="9"/></svg><a href="#">Стрелки</a></div>
<div class="sec d-flex align-items-center ps-1"><svg width="7" height="9" viewBox="0 0 7 9"><use href="#i-rt" width="5" height="9"/></svg><a href="#">Блок-схема</a></div>
<div class="sec d-flex align-items-center ps-1"><svg width="7" height="9" viewBox="0 0 7 9"><use href="#i-rt" width="5" height="9"/></svg><a href="#">Сущность–связь</a></div>
<div class="sec d-flex align-items-center ps-1"><svg width="7" height="9" viewBox="0 0 7 9"><use href="#i-rt" width="5" height="9"/></svg><a href="#">UML</a></div>
</div>
<a href="#" class="more d-flex align-items-center mt-auto"><svg width="8" height="9" viewBox="0 0 8 9"><path class="ln" stroke-width="1.700" d="M4 .5v8M0 4.500h8"/></svg>Больше фигур...</a>
</aside>
<div class="split d-flex align-items-center justify-content-center flex-shrink-0"><svg width="3" height="7" viewBox="0 0 3 7"><path stroke="currentColor" d="M.5 0v7M2.500 0v7"/></svg></div>

<section class="d-flex flex-column flex-grow-1 overflow-hidden">
<div class="stage d-flex flex-grow-1 overflow-hidden">
<div class="flex-grow-1 overflow-hidden d-flex">
<svg class="sheet" width="830" height="1170">
<defs>
<pattern id="g" width="40" height="40" patternUnits="userSpaceOnUse"><path d="M10.500 0v40M20.500 0v40M30.500 0v40M0 10.500h40M0 20.500h40M0 30.500h40" stroke="#f7f7f7"/><path d="M.5 0v40M0 .5h40" stroke="#e3e3e3"/></pattern>
<marker id="ar" markerUnits="userSpaceOnUse" markerWidth="9" markerHeight="8" refX="7" refY="4" orient="auto"><path d="M0 .5L7.500 4 0 7.500 2 4z" stroke="#000"/></marker>
</defs>
<path fill="url(#g)" d="M1 1h827v1168H1z"/>
<g fill="#fff" stroke="#000">
<rect x="354.500" y="80.500" width="120" height="60" rx="9"/>
<path d="M374.500 210.500h100l-20 60h-100z"/>
<path d="M414.500 340.500l40 40-40 40-40-40z"/>
<path id="doc" d="M170.500 340.500h120v68q-30-22-60 0t-60 0z"/>
<use href="#doc" x="390"/>
<rect x="354.500" y="480.500" width="120" height="60" rx="9"/>
</g>
<g fill="none" stroke="#000">
<path marker-end="url(#ar)" d="M414.500 140.500v69"/>
<path marker-end="url(#ar)" d="M414.500 270.500v69"/>
<path marker-end="url(#ar)" d="M414.500 420.500v59"/>
<path marker-end="url(#ar)" d="M374.500 380.500h-83"/>
<path marker-end="url(#ar)" d="M454.500 380.500h105"/>
<path marker-end="url(#ar)" d="M230.500 420.500v90h120v9"/>
<path marker-end="url(#ar)" d="M620.500 420.500v90h-145"/>
</g>
<path fill="#fff" d="M321 374h23v13h-23zM498 374h19v13h-19z"/>
<text x="414" y="114">start</text><text x="414" y="244">a</text><text x="414" y="384">a%3==0</text>
<text x="230" y="372">bolunmur</text><text x="620" y="372">bolunur</text><text x="414" y="514">end</text>
<text class="sm" x="332" y="384">false</text><text class="sm" x="507" y="384">true</text>
</svg>
</div>
<div class="vtrack"><div class="vthumb"></div></div>
</div>
<div class="htrack flex-shrink-0"><div class="hthumb"></div></div>
<div class="pages d-flex flex-shrink-0">
<button class="bare" aria-label="Страницы"><svg width="3" height="13" viewBox="0 0 3 13" fill="currentColor"><path d="M0 0h3v3H0zM0 5h3v3H0zM0 10h3v3H0z"/></svg></button>
<a href="#" class="cur d-flex align-items-center justify-content-center">Страница 1</a>
<button class="bare" aria-label="Добавить страницу"><svg width="13" height="13" viewBox="0 0 13 13"><path fill="currentColor" d="M5 0h3v5h5v3H8v5H5V8H0V5h5z"/></svg></button>
</div>
</section>

<aside class="fmt flex-shrink-0">
<div class="ftabs d-flex">
<button class="bare pt-1">Диаграмма</button><button class="bare alt">Стиль</button>
<button class="bare alt x-b" aria-label="Закрыть"><svg width="9" height="9" viewBox="0 0 9 9"><path class="ln" stroke-width="2" d="M1 1l7 7M8 1L1 8"/></svg></button>
</div>
<section class="blk first">
<h2>Вид</h2>
<div class="d-flex align-items-center line24"><input class="tick" type="checkbox" id="c1" checked><label for="c1">Сетка</label>
<div class="d-flex align-items-center ms-auto"><input class="num" type="text" value="10 pt" aria-label="Шаг сетки"><span class="spin d-flex flex-column"><button class="bare" aria-label="Больше"><svg width="8" height="4" viewBox="0 0 8 4"><path class="ln" d="M.5 3.500L4 .5l3.500 3z"/></svg></button><button class="bare" aria-label="Меньше"><svg width="8" height="4" viewBox="0 0 8 4"><path class="ln" d="M.5 .5L4 3.500l3.500-3z"/></svg></button></span><button class="swatch ms-1" aria-label="Цвет сетки"><span></span></button></div></div>
<div class="d-flex align-items-center line24"><input class="tick" type="checkbox" id="c2" checked><label for="c2">Вид страницы</label></div>
<div class="d-flex align-items-center line24"><input class="tick" type="checkbox" id="c3"><label for="c3">Фон</label><button class="chg ms-auto">Измен…</button></div>
<div class="d-flex align-items-center line24"><input class="tick" type="checkbox" id="c4"><label for="c4">Тень</label></div>
</section>
<section class="blk">
<h2>Параметры</h2>
<div class="d-flex align-items-center line24"><input class="tick" type="checkbox" id="c5" checked><label for="c5">Стрелки соединения</label></div>
<div class="d-flex align-items-center line24"><input class="tick" type="checkbox" id="c6" checked><label for="c6">Точки соединения</label></div>
<div class="d-flex align-items-center line24"><input class="tick" type="checkbox" id="c7" checked><label for="c7">Направляющие</label></div>
</section>
<section class="blk">
<h2><label for="paper">Размер бумаги</label></h2>
<select class="form-select paper" id="paper"><option>A4 (210 mm x 297 mm)</option></select>
<div class="d-flex align-items-center line24 ps-2"><input class="dot" type="radio" name="o" id="r1" checked><label for="r1" class="me-2">Портретная</label><input class="dot ms-1" type="radio" name="o" id="r2"><label for="r2">Альбомная</label></div>
</section>
<section class="blk btns d-flex flex-column">
<button class="wide-b">Редактировать данные...</button>
<button class="wide-b">Очистить стиль по умолчанию</button>
</section>
</aside>
</main>
</div>
</div>
</body>
</html>
